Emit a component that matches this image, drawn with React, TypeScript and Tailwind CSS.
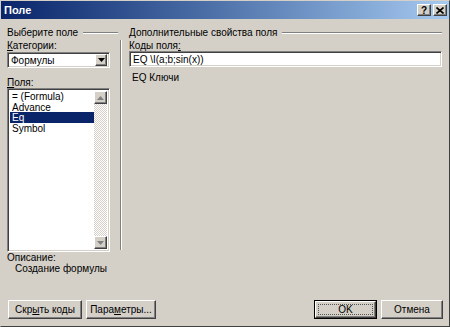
import React from 'react'

const raised =
  'border border-t-white border-l-white border-r-[#404040] border-b-[#404040] shadow-[inset_-1px_-1px_0_#808080]'
const sunken =
  'border border-t-[#808080] border-l-[#808080] border-r-white border-b-white shadow-[inset_1px_1px_0_#404040,inset_-1px_-1px_0_#d4d0c8]'

function U({ children }: { children: React.ReactNode }) {
  return <span className="underline underline-offset-[1px]">{children}</span>
}

function GroupTitle({ text }: { text: string }) {
  return (
    <div className="flex items-center h-[11px] gap-[5px]">
      <span className="whitespace-nowrap">{text}</span>
      <div className="flex-1 h-[2px] border-t border-t-[#808080] border-b border-b-white" />
    </div>
  )
}

function Arrow({ up, color = 'black' }: { up?: boolean; color?: string }) {
  return (
    <svg width="7" height="4" viewBox="0 0 7 4">
      <path d={up ? 'M3.5 0 L7 4 L0 4 Z' : 'M0 0 L7 0 L3.5 4 Z'} fill={color} />
    </svg>
  )
}

function Button({ children, def }: { children: React.ReactNode; def?: boolean }) {
  return (
    <div className={def ? 'border border-black' : ''}>
      <div
        className={`${raised} ${def ? 'w-[61px] h-[17px]' : 'h-[19px]'} flex items-center justify-center px-[2px] whitespace-nowrap`}
      >
        {def ? (
          <div className="border border-dotted border-[#555] w-[55px] h-[11px] flex items-center justify-center">
            {children}
          </div>
        ) : (
          children
        )}
      </div>
    </div>
  )
}

export default function App() {
  return (
    <div
      className="w-[450px] h-[327px] bg-[#d4d0c8] flex flex-col border border-t-[#d4d0c8] border-l-[#d4d0c8] border-r-[#404040] border-b-[#404040] text-[10px] leading-[11px] text-black"
      style={{ fontFamily: '"Liberation Sans", Arial, sans-serif' }}
    >
      <div className="h-[18px] shrink-0 bg-gradient-to-r from-[#0a246a] to-[#a6caf0] flex items-center justify-between pl-[3px] pr-[2px]">
        <span className="text-white font-bold text-[11px]">Поле</span>
        <div className="flex gap-[2px]">
          <div className={`${raised} bg-[#d4d0c8] w-[14px] h-[12px] flex items-center justify-center font-bold text-[10px]`}>
            ?
          </div>
          <div className={`${raised} bg-[#d4d0c8] w-[14px] h-[12px] flex items-center justify-center`}>
            <svg width="8" height="7" viewBox="0 0 8 7">
              <path d="M0.5 0.5 L7.5 6.5 M7.5 0.5 L0.5 6.5" stroke="black" strokeWidth="1.6" />
            </svg>
          </div>
        </div>
      </div>

      <div className="flex-1 flex flex-col px-[6px] pt-[8px] pb-[7px]">
        <div className="flex flex-1">
          <div className="w-[111px] flex flex-col">
            <GroupTitle text="Выберите поле" />
            <div className="mt-[2px] h-[11px]">
              <U>К</U>атегории:
            </div>
            <div className={`${sunken} mt-[1px] w-[103px] h-[16px] bg-white flex items-center justify-between pl-[3px] pr-[2px]`}>
              <span>Формулы</span>
              <div className={`${raised} bg-[#d4d0c8] w-[12px] h-[12px] flex items-center justify-center`}>
                <Arrow />
              </div>
            </div>
            <div className="mt-[9px] h-[11px]">
              <U>П</U>оля:
            </div>
            <div className={`${sunken} w-[103px] h-[164px] bg-white flex p-[2px]`}>
              <div className="flex-1 flex flex-col">
                <div className="pl-[2px] h-[10.7px]">= (Formula)</div>
                <div className="pl-[2px] h-[10.7px]">Advance</div>
                <div className="pl-[2px] h-[10.7px] bg-[#0a246a] text-white">Eq</div>
                <div className="pl-[2px] h-[10.7px]">Symbol</div>
              </div>
              <div className="w-[13px] flex flex-col justify-between bg-[repeating-conic-gradient(#d4d0c8_0_25%,#ffffff_0_50%)] bg-[length:2px_2px]">
                <div className={`${raised} bg-[#d4d0c8] h-[13px] flex items-center justify-center`}>
                  <Arrow up color="#808080" />
                </div>
                <div className={`${raised} bg-[#d4d0c8] h-[13px] flex items-center justify-center`}>
                  <Arrow color="#808080" />
                </div>
              </div>
            </div>
            <div className="mt-[1px] h-[10px] leading-[10px]">Описание:</div>
            <div className="pl-[8px] h-[11px] whitespace-nowrap">Создание формулы</div>
          </div>

          <div className="ml-[2px] mt-[13px] mb-[50px] w-[2px] border-l border-l-[#808080] border-r border-r-white" />

          <div className="ml-[7px] w-[313px] flex flex-col">
            <GroupTitle text="Дополнительные свойства поля" />
            <div className="mt-[2px] h-[11px]">
              Коды поля<U>:</U>
            </div>
            <div className={`${sunken} h-[16px] bg-white flex items-center pl-[3px]`}>
              EQ \I(a;b;sin(x))
            </div>
            <div className="mt-[5px] pl-[3px] h-[11px]">EQ Ключи</div>
          </div>
        </div>

        <div className="flex items-end justify-between">
          <div className="flex gap-[4px] pl-[1px]">
            <div className="w-[74px]">
              <Button>
                Скр<U>ы</U>ть коды
              </Button>
            </div>
            <div className="w-[70px]">
              <Button>
                Пара<U>м</U>етры...
              </Button>
            </div>
          </div>
          <div className="flex gap-[4px]">
            <Button def>OK</Button>
            <div className="w-[62px]">
              <Button>Отмена</Button>
            </div>
          </div>
        </div>
      </div>
    </div>
  )
}
